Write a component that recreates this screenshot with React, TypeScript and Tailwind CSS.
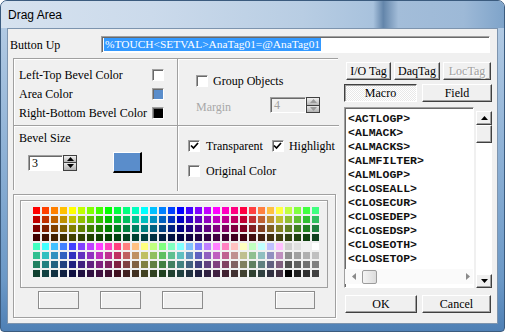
import React from "react";

const serif = "font-['Liberation_Serif','Times_New_Roman',serif] text-[12px] leading-[14px] text-black";
const raised =
  "border border-t-white border-l-white border-r-[#404040] border-b-[#404040] shadow-[inset_-1px_-1px_0_#a0a0a0] bg-[#f0f0f0]";
const sunken =
  "border border-t-[#a0a0a0] border-l-[#a0a0a0] border-r-white border-b-white shadow-[inset_1px_1px_0_#696969]";
const pressed =
  "border border-t-[#404040] border-l-[#404040] border-r-white border-b-white shadow-[inset_1px_1px_0_#a0a0a0] bg-[repeating-conic-gradient(#ffffff_0_25%,#e8e8e8_0_50%)] bg-[length:2px_2px]";

const hex = (n: number) => Math.round(n).toString(16).padStart(2, "0");

// one hue cycle whose channels step through the given levels
function cycle(v: number[]) {
  const m = v.length - 1;
  const T = 255;
  const L = v[0];
  const out: number[][] = [];
  for (let k = 0; k < m; k++) out.push([T, v[k], L]);
  for (let k = 0; k < m; k++) out.push([v[m - k], T, L]);
  for (let k = 0; k < m; k++) out.push([L, T, v[k]]);
  for (let k = 0; k < m; k++) out.push([L, v[m - k], T]);
  for (let k = 0; k < m; k++) out.push([v[k], L, T]);
  for (let k = 0; k < m; k++) out.push([T, L, v[m - k]]);
  return out;
}

const base = [
  ...cycle([0, 64, 128, 192, 255]),
  ...cycle([64, 128, 192, 255]),
  ...cycle([128, 192, 255]),
  ...cycle([192, 255]),
];
const grays = [
  [0xd0, 0xe0, 0xf0, 0xff],
  [0x90, 0xa0, 0xb0, 0xc0],
  [0x50, 0x60, 0x70, 0x80],
  [0x00, 0x20, 0x30, 0x40],
];
const palette: string[] = [];
for (let half = 0; half < 2; half++) {
  const src = base.slice(half * 32, half * 32 + 32);
  for (let r = 0; r < 4; r++) {
    const f = (4 - r) / 4;
    src.forEach((c) => palette.push("#" + c.map((x) => hex(x * f)).join("")));
    if (half === 1) grays[r].forEach((g) => palette.push("#" + hex(g).repeat(3)));
  }
}

const macros = [
  "<ACTLOGP>",
  "<ALMACK>",
  "<ALMACKS>",
  "<ALMFILTER>",
  "<ALMLOGP>",
  "<CLOSEALL>",
  "<CLOSECUR>",
  "<CLOSEDEP>",
  "<CLOSEDSP>",
  "<CLOSEOTH>",
  "<CLOSETOP>",
];

function Check({ on }: { on?: boolean }) {
  return (
    <span className={`flex h-[12px] w-[12px] shrink-0 items-center justify-center bg-white ${sunken}`}>
      {on && (
        <svg width="9" height="8" viewBox="0 0 9 8">
          <path d="M1 3.5 L3.5 6 L8 1" fill="none" stroke="#000" strokeWidth="1.7" />
        </svg>
      )}
    </span>
  );
}

function Spin({ disabled }: { disabled?: boolean }) {
  const c = disabled ? "#9a9a9a" : "#000";
  return (
    <div className="flex h-[16px] w-[14px] shrink-0 flex-col border border-[#404040] bg-[#404040]">
      <div className="flex flex-1 items-center justify-center border-b border-[#404040] bg-[linear-gradient(#f0f0f0,#b8b8b8)]">
        <svg width="7" height="4" viewBox="0 0 7 4">
          <path d="M3.5 0 L7 4 L0 4Z" fill={c} />
        </svg>
      </div>
      <div className="flex flex-1 items-center justify-center bg-[linear-gradient(#e8e8e8,#b0b0b0)]">
        <svg width="7" height="4" viewBox="0 0 7 4">
          <path d="M0 0 L7 0 L3.5 4Z" fill={c} />
        </svg>
      </div>
    </div>
  );
}

function Arrow({ dir }: { dir: "up" | "down" }) {
  return (
    <svg width="7" height="4" viewBox="0 0 7 4">
      <path d={dir === "up" ? "M3.5 0 L7 4 L0 4Z" : "M0 0 L7 0 L3.5 4Z"} fill="#000" />
    </svg>
  );
}

export default function App() {
  return (
    <div className="flex h-[332px] w-[505px] flex-col overflow-hidden rounded-t-[7px] rounded-b-[4px] border border-[#3b5b7e] bg-[linear-gradient(180deg,#b9cfe6_0%,#8fb2d6_45%,#6b98c6_85%,#4f80b5_100%)]">
      <div className="flex h-[27px] shrink-0 items-center pl-[7px] bg-[linear-gradient(90deg,#d6e2ef_0%,#cbdaeb_30%,#b8cde3_60%,#a8c2dd_74%,#6385aa_76%,#a3bdd9_79%,#9db9d7_92%,#7fa4ca_100%)] font-['Liberation_Sans',Arial,sans-serif] text-[12px] text-black">
        Drag Area
      </div>

      <div className="mx-[6px] flex h-[296px] shrink-0 flex-col border border-[#7d94ae] bg-[#f0f0f0]">
        {/* Button Up */}
        <div className={`flex items-center pl-[2px] pt-[7px] ${serif}`}>
          <span className="w-[91px]">Button Up</span>
          <div className={`flex h-[17px] w-[389px] items-center bg-white pl-[2px] ${sunken}`}>
            <span className="bg-[#3399ff] px-[1px] text-[11.4px] leading-[13px] text-white">
              %TOUCH&lt;SETVAL&gt;AnaTag01=@AnaTag01
            </span>
          </div>
        </div>

        <div className="flex pl-[5px] pt-[5px]">
          {/* left side */}
          <div className="flex w-[325px] flex-col">
            <div className="grid h-[132px] grid-cols-[164px_161px] grid-rows-[67px_65px] border-l border-t border-[#a0a0a0] shadow-[inset_1px_1px_0_#ffffff]">
              <div className={`flex flex-col border-b border-r border-[#a0a0a0] pl-[5px] pr-[13px] pt-[6px] shadow-[1px_1px_0_#ffffff] ${serif}`}>
                <div className="flex h-[19px] items-center justify-between">
                  <span>Left-Top Bevel Color</span>
                  <span className={`h-[12px] w-[12px] bg-white ${sunken}`} />
                </div>
                <div className="flex h-[19px] items-center justify-between">
                  <span>Area Color</span>
                  <span className={`h-[12px] w-[12px] bg-[#5a8dcb] ${sunken}`} />
                </div>
                <div className="flex h-[19px] items-center justify-between">
                  <span>Right-Bottom Bevel Color</span>
                  <span className={`h-[12px] w-[12px] bg-black ${sunken}`} />
                </div>
              </div>

              <div className={`flex flex-col border-b border-[#a0a0a0] pl-[18px] pt-[16px] shadow-[0_1px_0_#ffffff] ${serif}`}>
                <div className="flex h-[12px] items-center">
                  <Check />
                  <span className="ml-[5px]">Group Objects</span>
                </div>
                <div className="mt-[10px] flex h-[16px] items-center">
                  <span className="w-[74px] pt-[4px] text-[#a8a8a8]">Margin</span>
                  <div className={`flex h-[16px] w-[36px] items-center bg-[#f0f0f0] pl-[3px] text-[#a0a0a0] ${sunken}`}>4</div>
                  <Spin disabled />
                </div>
              </div>

              <div className={`flex flex-col border-r border-[#a0a0a0] pl-[5px] pt-[5px] shadow-[1px_0_0_#ffffff] ${serif}`}>
                <span>Bevel Size</span>
                <div className="mt-[7px] flex items-center pl-[9px]">
                  <div className={`flex h-[16px] w-[35px] items-center bg-white pl-[3px] ${sunken}`}>3</div>
                  <Spin />
                  <div className="ml-[36px] h-[21px] w-[29px] border-b-2 border-l border-r-2 border-t border-b-black border-l-white border-r-black border-t-white bg-[#5a8dcb]" />
                </div>
              </div>

              <div className={`flex flex-col pl-[10px] pt-[14px] ${serif}`}>
                <div className="flex h-[12px] items-center">
                  <Check on />
                  <span className="ml-[6px]">Transparent</span>
                  <span className="ml-[9px]">
                    <Check on />
                  </span>
                  <span className="ml-[5px]">Highlight</span>
                </div>
                <div className="mt-[13px] flex h-[12px] items-center">
                  <Check />
                  <span className="ml-[6px]">Original Color</span>
                </div>
              </div>
            </div>

            {/* palette */}
            <div className="mt-[4px] flex h-[124px] w-[323px] flex-col border border-[#a0a0a0] shadow-[inset_1px_1px_0_#ffffff,1px_1px_0_#ffffff]">
              <div className="ml-[6px] mt-[5px] h-[88px] w-[308px] border border-[#a0a0a0] pl-[12px] pt-[6px] shadow-[inset_1px_1px_0_#ffffff]">
                <div className="grid grid-cols-[repeat(32,7px)] gap-[2px]">
                  {palette.map((c, i) => (
                    <span key={i} className="h-[7px] w-[7px]" style={{ background: c }} />
                  ))}
                </div>
              </div>
              <div className="mt-[3px] flex">
                <div className="ml-[24px] h-[18px] w-[41px] border border-[#8c8c8c] shadow-[inset_1px_1px_0_#ffffff]" />
                <div className="ml-[21px] h-[18px] w-[41px] border border-[#8c8c8c] shadow-[inset_1px_1px_0_#ffffff]" />
                <div className="ml-[21px] h-[18px] w-[41px] border border-[#8c8c8c] shadow-[inset_1px_1px_0_#ffffff]" />
                <div className="ml-[72px] h-[18px] w-[40px] border border-[#8c8c8c] shadow-[inset_1px_1px_0_#ffffff]" />
              </div>
            </div>
          </div>

          {/* right side */}
          <div className={`ml-[6px] flex w-[148px] flex-col pt-[4px] ${serif}`}>
            <div className="flex gap-[3px] pl-[2px]">
              <div className={`flex h-[18px] w-[45px] items-center justify-center ${raised}`}>I/O Tag</div>
              <div className={`flex h-[18px] w-[46px] items-center justify-center ${raised}`}>DaqTag</div>
              <div className={`flex h-[18px] w-[48px] items-center justify-center text-[#a0a0a0] [text-shadow:1px_1px_0_#fff] ${raised}`}>
                LocTag
              </div>
            </div>
            <div className="mt-[4px] flex">
              <div className={`flex h-[18px] w-[73px] items-center justify-center ${pressed}`}>Macro</div>
              <div className={`ml-[5px] flex h-[18px] w-[70px] items-center justify-center ${raised}`}>Field</div>
            </div>
            <div className="mt-[5px] flex">
              <div className={`flex h-[181px] w-[130px] flex-col bg-white ${sunken}`}>
                <div className="flex flex-1 flex-col pl-[3px] pt-[4px] font-['Liberation_Mono','Courier_New',monospace] text-[11.5px] font-bold leading-[14px] text-[#111]">
                  {macros.map((m) => (
                    <span key={m} className="h-[14px] whitespace-pre">
                      {m}
                    </span>
                  ))}
                </div>
                <div className="mb-[3px] flex h-[15px] items-center bg-[#fafafa] pl-[7px] pr-[3px]">
                  <svg width="4" height="7" viewBox="0 0 4 7">
                    <path d="M4 0 L4 7 L0 3.5Z" fill="#8a8a8a" />
                  </svg>
                  <div className="ml-[6px] h-[14px] w-[15px] rounded-[2px] border border-[#9c9c9c] bg-[linear-gradient(90deg,#f4f4f4,#dcdcdc)]" />
                  <svg className="ml-auto" width="4" height="7" viewBox="0 0 4 7">
                    <path d="M0 0 L4 3.5 L0 7Z" fill="#8a8a8a" />
                  </svg>
                </div>
              </div>
              <div className="ml-[2px] mt-[4px] flex h-[177px] w-[16px] flex-col bg-white">
                <div className={`flex h-[14px] items-center justify-center ${raised}`}>
                  <Arrow dir="up" />
                </div>
                <div className={`h-[18px] ${raised}`} />
                <div className="flex-1" />
                <div className={`flex h-[14px] items-center justify-center ${raised}`}>
                  <Arrow dir="down" />
                </div>
              </div>
            </div>
            <div className="mt-[7px] flex">
              <div className={`ml-[1px] flex h-[18px] w-[72px] items-center justify-center ${raised}`}>OK</div>
              <div className={`ml-[5px] flex h-[18px] w-[69px] items-center justify-center ${raised}`}>Cancel</div>
            </div>
          </div>
        </div>
      </div>
    </div>
  );
}
